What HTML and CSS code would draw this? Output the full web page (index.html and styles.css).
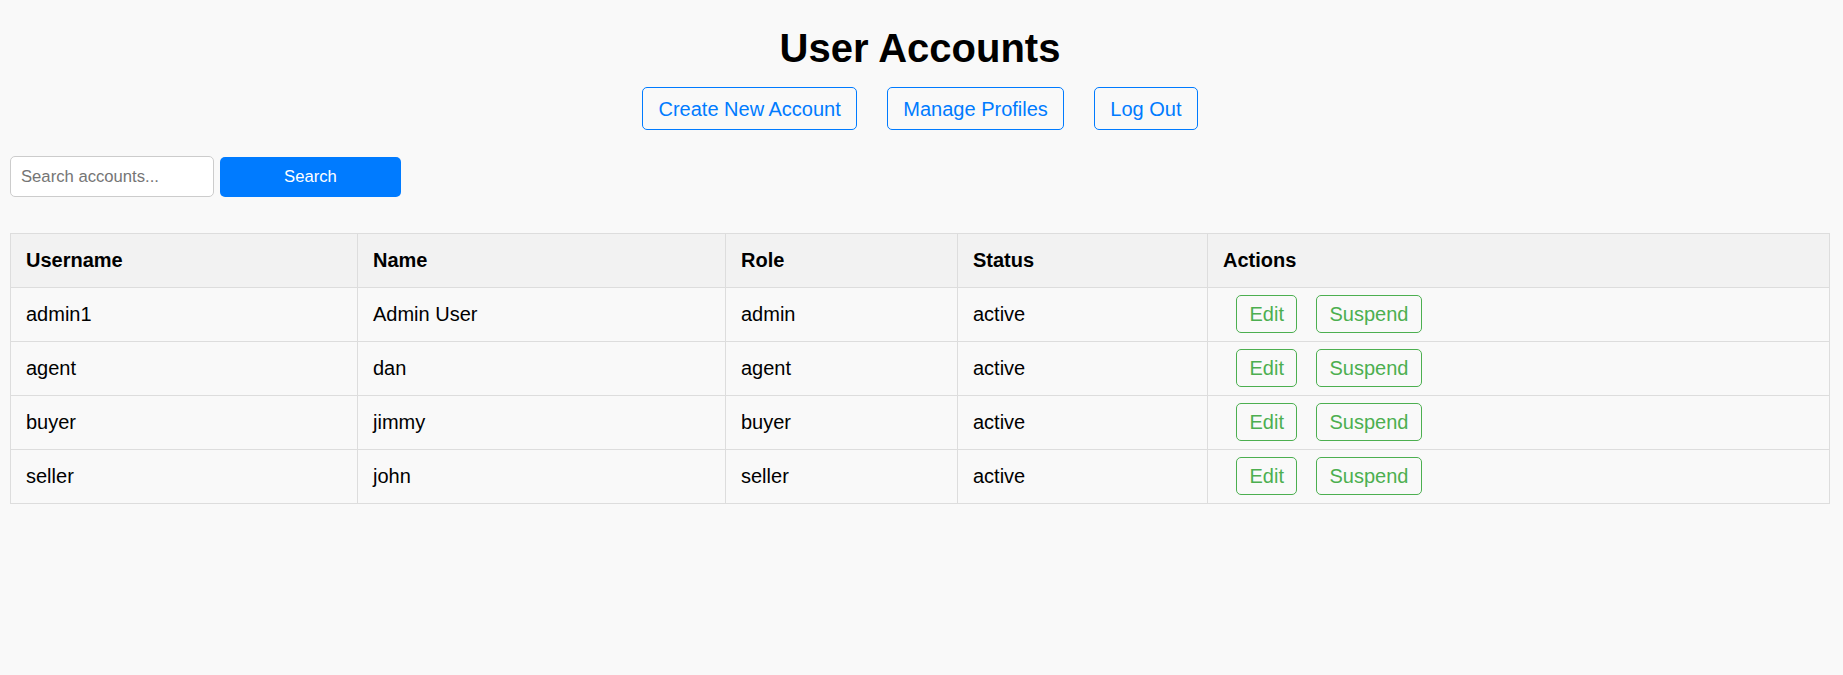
FILE: index.html
```html
<!DOCTYPE html>
<html lang="en">
<head>
<meta charset="utf-8">
<title>User Accounts</title>
<link rel="stylesheet" href="styles.css">
</head>
<body>
<div class="page">
  <h1 class="title">User Accounts</h1>
  <nav class="nav">
    <a href="#" class="nav-btn">Create New Account</a>
    <a href="#" class="nav-btn">Manage Profiles</a>
    <a href="#" class="nav-btn">Log Out</a>
  </nav>
  <form class="search" onsubmit="return false">
    <input class="search-input" type="text" placeholder="Search accounts...">
    <button class="search-btn" type="submit">Search</button>
  </form>
  <table class="accounts">
    <colgroup>
      <col class="col-user">
      <col class="col-name">
      <col class="col-role">
      <col class="col-status">
      <col class="col-actions">
    </colgroup>
    <thead>
      <tr><th>Username</th><th>Name</th><th>Role</th><th>Status</th><th>Actions</th></tr>
    </thead>
    <tbody>
      <tr><td>admin1</td><td>Admin User</td><td>admin</td><td>active</td><td><a href="#" class="act-btn">Edit</a><a href="#" class="act-btn">Suspend</a></td></tr>
      <tr><td>agent</td><td>dan</td><td>agent</td><td>active</td><td><a href="#" class="act-btn">Edit</a><a href="#" class="act-btn">Suspend</a></td></tr>
      <tr><td>buyer</td><td>jimmy</td><td>buyer</td><td>active</td><td><a href="#" class="act-btn">Edit</a><a href="#" class="act-btn">Suspend</a></td></tr>
      <tr><td>seller</td><td>john</td><td>seller</td><td>active</td><td><a href="#" class="act-btn">Edit</a><a href="#" class="act-btn">Suspend</a></td></tr>
    </tbody>
  </table>
</div>
</body>
</html>
```

FILE: styles.css
```css
html, body {
  margin: 0;
  padding: 0;
  background: #f9f9f9;
  font-family: "Liberation Sans", Arial, sans-serif;
  color: #000;
}

.page {
  padding: 25px 13px 0 10px;
}

.title {
  margin: 0;
  font-size: 40px;
  line-height: 46px;
  font-weight: bold;
  text-align: center;
}

.nav {
  display: flex;
  justify-content: center;
  gap: 30.5px;
  margin-top: 16px;
}

.nav-btn {
  display: inline-block;
  font-size: 20px;
  line-height: 23px;
  padding: 10px 15px 8.4px;
  border: 1px solid #007bff;
  border-radius: 5px;
  color: #007bff;
  text-decoration: none;
  background: transparent;
}

.search {
  display: flex;
  align-items: center;
  gap: 6.5px;
  margin: 26px 0 0 0;
}

.search-input {
  box-sizing: border-box;
  width: 203.5px;
  height: 41px;
  padding: 1px 10px 0;
  border: 1px solid #ccc;
  border-radius: 5px;
  background: #fff;
  font-family: "Liberation Sans", Arial, sans-serif;
  font-size: 16.67px;
  color: #000;
  outline: none;
}

.search-input::placeholder {
  color: #757575;
}

.search-btn {
  box-sizing: border-box;
  width: 181px;
  height: 40px;
  border: none;
  border-radius: 5px;
  background: #007bff;
  color: #fff;
  font-family: "Liberation Sans", Arial, sans-serif;
  font-size: 16.67px;
  padding: 1px 0 0;
}

.accounts {
  width: 100%;
  margin-top: 36px;
  border-collapse: collapse;
  table-layout: fixed;
  border: 1px solid #ddd;
  font-size: 20px;
  line-height: 23px;
}

.col-user { width: 347px; }
.col-name { width: 368px; }
.col-role { width: 232px; }
.col-status { width: 250px; }

.accounts th,
.accounts td {
  border: 1px solid #ddd;
  padding: 15px;
  text-align: left;
  vertical-align: middle;
  white-space: nowrap;
}

.accounts th {
  background: #f2f2f2;
  font-weight: bold;
}

.accounts td {
  background: #f9f9f9;
}

.act-btn {
  display: inline;
  padding: 7px 12.5px;
  margin-left: 13px;
  border: 1px solid #4caf50;
  border-radius: 5px;
  color: #4caf50;
  text-decoration: none;
}

.act-btn + .act-btn {
  margin-left: 18.5px;
}
```
